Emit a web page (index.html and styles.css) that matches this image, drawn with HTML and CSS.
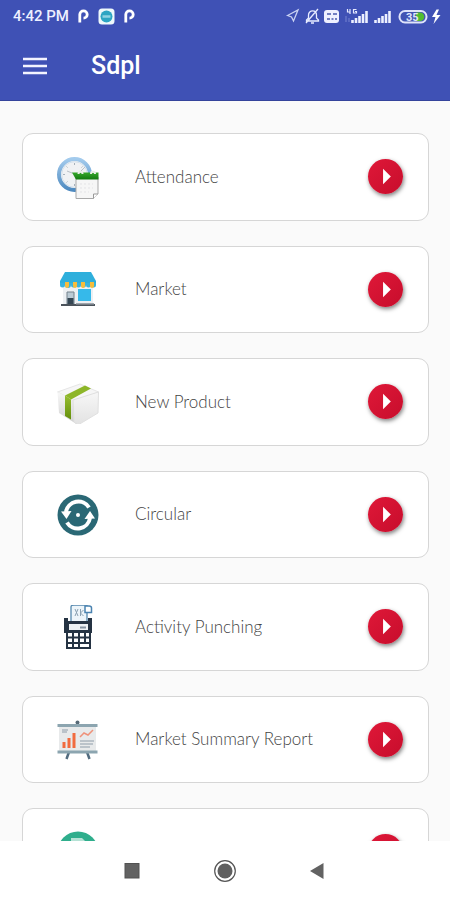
FILE: index.html
```html
<!DOCTYPE html>
<html lang="en">
<head>
<meta charset="utf-8">
<meta name="viewport" content="width=device-width, initial-scale=1">
<title>Sdpl</title>
<link rel="stylesheet" href="styles.css">
</head>
<body>
<svg class="defs" aria-hidden="true">
  <defs>
    <linearGradient id="rim" x1="0" y1="0" x2="0" y2="1"><stop offset="0" stop-color="#a3cbed"/><stop offset="1" stop-color="#4e8ac0"/></linearGradient>
    <linearGradient id="leaf" x1="0" y1="0" x2="0" y2="1"><stop offset="0" stop-color="#36a82b"/><stop offset="1" stop-color="#127a10"/></linearGradient>
    <linearGradient id="boxside" x1="0" y1="0" x2="0" y2="1"><stop offset="0" stop-color="#f8f8f8"/><stop offset="1" stop-color="#cfcfcf"/></linearGradient>
    <linearGradient id="boxfront" x1="0" y1="0" x2="0" y2="1"><stop offset="0" stop-color="#f7f7f7"/><stop offset="1" stop-color="#e2e2e2"/></linearGradient>
    <linearGradient id="ribbon" x1="0" y1="0" x2="0" y2="1"><stop offset="0" stop-color="#96bd30"/><stop offset="1" stop-color="#648f0b"/></linearGradient>
    <symbol id="play" viewBox="0 0 36 36"><path d="M15.500 10L23.500 18L15.500 26Z" fill="#fff"/></symbol>
    <symbol id="pmark" viewBox="0 0 11 14"><path d="M1.800 13.500V5.500A3.700 3.700 0 1 1 5.500 9.200" fill="none" stroke="#fff" stroke-width="2.800"/></symbol>
  </defs>
</svg>
<header class="top">
  <div class="status">
    <span class="clock">4:42 PM</span>
    <svg class="pay" width="11" height="14"><use href="#pmark"/></svg>
    <svg class="app" width="17" height="17" viewBox="0 0 17 17"><rect x=".5" y=".5" width="16" height="16" rx="3.500" fill="#eef8fb"/><circle cx="8.500" cy="8.500" r="6" fill="#2ca5c3"/><path d="M4.500 8.500h8" stroke="#8fd3e2" stroke-width="2.500"/></svg>
    <svg class="pay" width="11" height="14"><use href="#pmark"/></svg>
    <svg class="signals" width="158" height="20" viewBox="0 0 158 20" aria-label="Signal and battery">
      <g fill="none" stroke="#cbd3f3" stroke-width="1.300">
        <path d="M3.500 9.500L14 4L9.500 15L7.500 11Z"/>
        <path d="M22.500 15V14L24.500 12V9C24.500 3.500 32.500 3.500 32.500 9V12L34.500 14V15ZM27 17h3M22 17L34 3" stroke="#e8ecff"/>
      </g>
      <rect x="40" y="4" width="15" height="13" rx="3" fill="#eef0ff"/>
      <path d="M43 8h4M49 8h4M43 13h3M47.500 13h2M51 13h2" stroke="#4959ae" stroke-width="1.500"/>
      <path d="M63.500 3v3h3M66 3v5M72.500 3.500H69.500V7H72.500V5.500H71" fill="none" stroke="#e5e9ff" stroke-width="1.200"/>
      <path d="M62 10v6M65 12v4" stroke="#7784d1" stroke-width="1"/>
      <path d="M68.500 17v-3M72 17v-5M75.500 17v-7M79 17V8M82.500 17V5M91.500 17v-3M95 17v-5M98.500 17v-7M102 17V8M105.500 17V5" stroke="#edf0ff" stroke-width="2.600"/>
      <rect x="115.500" y="5" width="27" height="11.500" rx="5.500" fill="#4254b4" stroke="#dfe4fa" stroke-width="2"/>
      <path d="M132 6.500h4a4 4 0 0 1 0 8.500h-4Z" fill="#50bd30"/>
      <text x="122" y="15" class="charge">35</text>
      <path d="M152.500 3.500L148 11h3.500L149.500 18L156.500 9h-4L155 3.500Z" fill="#fff"/>
    </svg>
  </div>
  <div class="toolbar">
    <button class="menu" aria-label="Open menu"><svg width="26" height="18" viewBox="0 0 26 18"><path d="M1 2h24M1 9h24M1 16h24" stroke="#f3f4ff" stroke-width="2.600"/></svg></button>
    <h1>Sdpl</h1>
  </div>
</header>
<main>
  <ul class="list">
    <li class="card">
      <svg class="icon" viewBox="0 0 44 44">
        <circle cx="18.500" cy="19.500" r="15.500" fill="#f0f2f4" stroke="url(#rim)" stroke-width="4"/>
        <circle cx="18.500" cy="19.500" r="12.800" fill="none" stroke="#d5e1eb" stroke-width="1"/>
        <path d="M18.500 8v2M18.500 29v2M7 19.500h2M10.500 11.500l1 1M26.500 11.500l-1 1M10.500 27.500l1-1" stroke="#a7b2bb"/>
        <path d="M11 16L21 20L29 12" stroke="#b9c0c7" fill="none"/>
        <path d="M20 22H42V39L37.500 43.500H20Z" fill="#f6f6f6" stroke="#a9a9a9"/>
        <path d="M16 17.500H42.500V24.500H20Z" fill="url(#leaf)"/>
        <path d="M22.500 19c0-3 4-3 4 0M35 19c0-3 4-3 4 0" stroke="#e9eee8" stroke-width="2" fill="none"/>
        <path d="M24 29h13M24 33h13M24 37h9" stroke="#e3e3e6" stroke-dasharray="2 2"/>
        <path d="M42 39H37.500V43.500" fill="#fff" stroke="#999"/>
      </svg>
      <span class="label">Attendance</span>
      <button class="go" aria-label="Open Attendance"><svg><use href="#play"/></svg></button>
    </li>
    <li class="card">
      <svg class="icon" viewBox="0 0 44 44">
        <path d="M7 17H37V38H7Z" fill="#edf0f3"/>
        <path d="M9 5H35L40 14V17H4V14Z" fill="#2eafdc"/>
        <path d="M4 16h36v2a2.500 2.500 0 0 1-5 0a2.500 2.500 0 0 1-5 0a2.500 2.500 0 0 1-5 0a2.500 2.500 0 0 1-5 0a2.500 2.500 0 0 1-5 0a2.500 2.500 0 0 1-6 0a2.500 2.500 0 0 1-5 0Z" fill="#37b4df"/>
        <path d="M9 15h4v4a2 2 0 0 1-4 0ZM17 15h4v4a2 2 0 0 1-4 0ZM25 15h4v4a2 2 0 0 1-4 0ZM34 15h4v4a2 2 0 0 1-4 0Z" fill="#f7bd3c"/>
        <rect x="22" y="22" width="13" height="12" fill="#36b9ea"/>
        <path d="M11 25h7v12h-7Z" fill="#bccbd5" stroke="#75838d"/>
        <path d="M11.500 31h6v6h-6Z" fill="#354653"/>
        <path d="M5 38H39" stroke="#4b535b" stroke-width="2"/>
        <path d="M20 37H38" stroke="#858d94" stroke-width="1.500"/>
      </svg>
      <span class="label">Market</span>
      <button class="go" aria-label="Open Market"><svg><use href="#play"/></svg></button>
    </li>
    <li class="card">
      <svg class="icon" viewBox="0 0 44 44">
        <path d="M1.500 12L24 4L42.500 12L20 22Z" fill="#f6f6f6" stroke="#e6e6e6"/>
        <path d="M1.500 12L19 21L22 45L3 33Z" fill="url(#boxside)"/>
        <path d="M17 20L42.500 12L42 33L22 45L18 42Z" fill="url(#boxfront)" stroke="#e0e0e0"/>
        <path d="M9 15.500L29 5.500L35 8.500L15 19.500Z" fill="#8db629"/>
        <path d="M9 15.500L15 19.500V39.500L9 36Z" fill="url(#ribbon)"/>
      </svg>
      <span class="label">New Product</span>
      <button class="go" aria-label="Open New Product"><svg><use href="#play"/></svg></button>
    </li>
    <li class="card">
      <svg class="icon" viewBox="0 0 44 44">
        <circle cx="22" cy="23" r="20.500" fill="#2a6875"/>
        <path d="M10 20A12.500 12.500 0 0 1 33 15.500M34 26A12.500 12.500 0 0 1 11 30.500" fill="none" stroke="#fff" stroke-width="4"/>
        <path d="M5 19.500L15.500 19L10.500 27ZM39 26.500L28.500 27L34 19Z" fill="#fff"/>
        <circle cx="22" cy="23" r="2" fill="#fff"/>
      </svg>
      <span class="label">Circular</span>
      <button class="go" aria-label="Open Circular"><svg><use href="#play"/></svg></button>
    </li>
    <li class="card">
      <svg class="icon" viewBox="0 0 44 44">
        <path d="M15 17V2Q15 0 18 0H31V17Z" fill="#edf5fa" stroke="#5588ae" stroke-width="1.300"/>
        <path d="M29 1V7.500H35.500V3Q35.500 1 33 1Z" fill="#fff" stroke="#4a82b0" stroke-width="1.500"/>
        <path d="M19 4l3 7M22 4l-3 7M24.500 4v7M24.500 8l3-3M24.500 8l3 3" stroke="#8aa1b2" fill="none"/>
        <path d="M8 13h4v3h20v-3h4v15h-1v16H10V28H8Z" fill="#253343"/>
        <path d="M13 19H32V25H13Z" fill="#edf1f4"/>
        <path d="M24 22.500h6" stroke="#8592a1" stroke-width="2"/>
        <path d="M12 28h4v3.500h-4ZM18 28h4v3.500h-4ZM24 28h4v3.500h-4ZM30 28h3v3.500h-3ZM12 33.500h4v3.500h-4ZM18 33.500h4v3.500h-4ZM24 33.500h4v3.500h-4ZM30 33.500h3v3.500h-3ZM12 39h4v3h-4ZM18 39h4v3h-4ZM24 39h9v3h-9Z" fill="#fff"/>
      </svg>
      <span class="label">Activity Punching</span>
      <button class="go" aria-label="Open Activity Punching"><svg><use href="#play"/></svg></button>
    </li>
    <li class="card">
      <svg class="icon" viewBox="0 0 44 44">
        <path d="M13 35L10.500 42M31 35L33.500 42" stroke="#526c7f" stroke-width="2.500"/>
        <circle cx="21.500" cy="5.500" r="2" fill="#576a77"/>
        <path d="M3 9H40V34H3Z" fill="#e8eaeb"/>
        <path d="M1.500 8.500H41.500M1.500 35H41.500" stroke="#8ca5b0" stroke-width="3"/>
        <path d="M8 31v-6M13 31v-10M18 31V16" stroke="#f16b3f" stroke-width="3"/>
        <path d="M6 13h6M6 15h5M24 24h14M24 27h13M24 30h10" stroke="#8d9ca9" stroke-width="1.200"/>
        <path d="M24 20L28 16L32 18L37 13" fill="none" stroke="#ef927a" stroke-width="1.500"/>
      </svg>
      <span class="label">Market Summary Report</span>
      <button class="go" aria-label="Open Market Summary Report"><svg><use href="#play"/></svg></button>
    </li>
    <li class="card">
      <svg class="icon" viewBox="0 0 44 44">
        <circle cx="22" cy="22" r="20.500" fill="#2fae8c"/>
        <path d="M15 8H26L30 12V35H15Z" fill="#b5e2d5"/>
      </svg>
      <span class="label"></span>
      <button class="go" aria-label="Open"><svg><use href="#play"/></svg></button>
    </li>
  </ul>
</main>
<nav class="system">
  <button aria-label="Recent apps"><svg viewBox="0 0 24 24"><rect x="5" y="4.500" width="14" height="14.500" fill="#626262" stroke="#525252"/></svg></button>
  <button aria-label="Home"><svg viewBox="0 0 24 24"><circle cx="12" cy="12" r="10.300" fill="none" stroke="#555" stroke-width="1.200"/><circle cx="12" cy="12" r="7.500" fill="#606060"/></svg></button>
  <button aria-label="Back"><svg viewBox="0 0 24 24"><path d="M4 12L17.500 4V20Z" fill="#626262"/></svg></button>
</nav>
</body>
</html>
```
FILE: styles.css
```css
* { box-sizing: border-box; }
body {
  margin: 0;
  height: 100vh;
  display: flex;
  flex-direction: column;
  overflow: hidden;
  background: #fafafa;
  font-family: Roboto, sans-serif;
}
button {
  padding: 0;
  border: 0;
  background: none;
  display: grid;
  place-items: center;
}
svg { display: block; flex: none; }
.defs { width: 0; height: 0; position: absolute; }

.top {
  flex: none;
  background: #3f51b5;
  color: #fff;
  border-bottom: 1px solid #35449c;
}
.status {
  height: 32px;
  padding: 0 8px 0 13px;
  display: flex;
  align-items: center;
  gap: 9px;
}
.clock { font-size: 15px; font-weight: 500; color: #eef0ff; }
.signals { margin-left: auto; }
.charge { font: 700 11px Roboto, sans-serif; fill: #dfe4fa; }
.toolbar {
  height: 68px;
  padding: 0 22px;
  display: flex;
  align-items: center;
  gap: 43px;
}
.toolbar h1 { margin: 0; font-size: 25px; line-height: 68px; font-weight: 500; }

main { flex: 1; min-height: 0; overflow: hidden; }
.list {
  margin: 0;
  padding: 32px 21px 32px 22px;
  list-style: none;
  display: grid;
  gap: 25px;
}
.card {
  min-height: calc(12.5vh - 25px);
  padding: 0 25px 0 33px;
  display: flex;
  align-items: center;
  gap: 35px;
  background: #fff;
  border: 1px solid #d6d6d6;
  border-radius: 11px;
}
.icon { width: 44px; height: 44px; }
.label {
  flex: 1;
  font: 300 17px/24px Lato, sans-serif;
  color: #444;
}
.go {
  width: 35px;
  height: 35px;
  border-radius: 50%;
  background: linear-gradient(135deg, #df1838, #c70d2c);
  box-shadow: 1px 2px 4px rgba(0, 0, 0, .5);
}
.go svg { width: 35px; height: 35px; }

.system {
  flex: none;
  height: 59px;
  display: flex;
  justify-content: center;
  align-items: center;
  gap: 69px;
  background: #fff;
}
.system svg { width: 24px; height: 24px; }
```
